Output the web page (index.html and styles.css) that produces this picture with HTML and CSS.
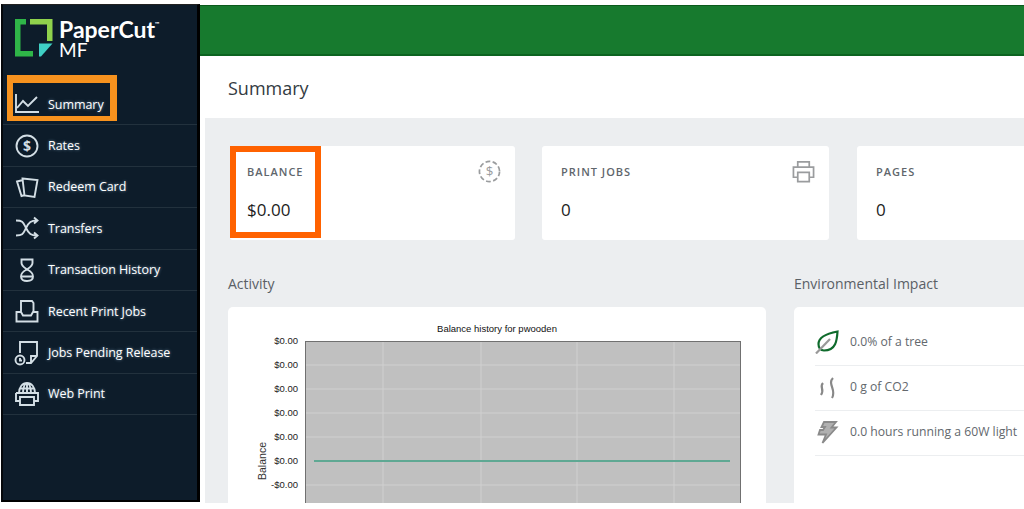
FILE: index.html
```html
<!DOCTYPE html>
<html lang="en">
<head>
<meta charset="utf-8">
<title>PaperCut MF - Summary</title>
<link rel="stylesheet" href="styles.css">
</head>
<body>
<div class="app">
  <aside class="sidebar">
    <div class="brand">
      <svg class="brand-mark" viewBox="0 0 38 38" width="38" height="38">
        <path d="M0 0H11V5.500H5.500V32H18V37.500H0Z" fill="#2fb548"/>
        <path d="M15 0H37.500V22H32V5.500H15Z" fill="#8fd24c"/>
        <path d="M24 24.500H37.500L26 37.500H24Z" fill="#3fd0c4"/>
      </svg>
      <div class="brand-text"><span class="brand-name">PaperCut<sup class="tm">™</sup></span><span class="brand-sub">MF</span></div>
    </div>
    <nav class="nav">
      <a class="nav-item">
        <svg class="ico" viewBox="0 0 26 22"><path d="M2 1V19H25M3 15L9 8L14 13L23 4" /></svg>
        <span class="nav-label">Summary</span>
        <span class="hl-nav"></span>
      </a>
      <a class="nav-item">
        <svg class="ico" viewBox="0 0 26 26"><circle cx="13" cy="13" r="10.500"/><text x="13" y="18" class="ico-text">$</text></svg>
        <span class="nav-label">Rates</span>
      </a>
      <a class="nav-item">
        <svg class="ico" viewBox="0 0 26 24"><path d="M9 5L3 6.500L7.500 21L11 20M8.500 3.500L23.500 5L20.500 22L10.500 20.500Z"/></svg>
        <span class="nav-label">Redeem Card</span>
      </a>
      <a class="nav-item">
        <svg class="ico" viewBox="0 0 26 24"><path d="M2 4.500C9 4.500 9 6 12 12C15 18 17 19.500 23 19.500M2 19.500C9 19.500 9 18 12 12C15 6 17 4.500 23 4.500M20 1.500L23.500 4.500L20 7.500M20 16.500L23.500 19.500L20 22.500"/></svg>
        <span class="nav-label">Transfers</span>
      </a>
      <a class="nav-item">
        <svg class="ico" viewBox="0 0 26 26"><path d="M7.500 2.500H18.500V6C18.500 9 15 11 13 12.500C11 11 7.500 9 7.500 6ZM13 12.500C16.500 14 19 16.500 19 19.500C19 22.500 16.500 24 13 24C9.500 24 7 22.500 7 19.500C7 16.500 9.500 14 13 12.500ZM7.500 19.500H18.500"/></svg>
        <span class="nav-label">Transaction History</span>
      </a>
      <a class="nav-item">
        <svg class="ico" viewBox="0 0 26 26"><path d="M7 14V3H18L19.500 5V14M2.500 14H7L9 17.500H17L19 14H23.500V23.500H2.500Z"/></svg>
        <span class="nav-label">Recent Print Jobs</span>
      </a>
      <a class="nav-item">
        <svg class="ico" viewBox="0 0 26 26"><path d="M6 13V2H23V16L17 23H12M17 23V16H23"/><circle cx="6" cy="20" r="4.500"/><path d="M6 18V20.500H8"/></svg>
        <span class="nav-label">Jobs Pending Release</span>
      </a>
      <a class="nav-item">
        <svg class="ico" viewBox="0 0 26 26"><path d="M5 12C5 6 8.500 2 13 2C17.500 2 21 6 21 12M9 12C9 6 11 2 13 2C15 2 17 6 17 12M13 2V12M5.500 7.500H20.500M2 12H24V20H20M6 20H2V12M6 16H20V24H6Z"/></svg>
        <span class="nav-label">Web Print</span>
      </a>
    </nav>
  </aside>

  <main class="main">
    <div class="topbar"></div>
    <header class="page-title"><h1>Summary</h1></header>
    <div class="content">
      <section class="stats">
        <article class="stat stat-balance">
          <div class="stat-label">BALANCE</div>
          <div class="stat-value">$0.00</div>
          <svg class="stat-ico" viewBox="0 0 24 24"><circle cx="12" cy="12" r="10.500" stroke-dasharray="5 2.500"/><text x="12" y="17" class="stat-ico-text">$</text></svg>
          <span class="hl-balance"></span>
        </article>
        <article class="stat">
          <div class="stat-label">PRINT JOBS</div>
          <div class="stat-value">0</div>
          <svg class="stat-ico" viewBox="0 0 24 24"><path d="M6 7V2H18V7M6 18H1.500V7.500H22.500V18H18M6 13H18V22.500H6Z"/></svg>
        </article>
        <article class="stat">
          <div class="stat-label">PAGES</div>
          <div class="stat-value">0</div>
        </article>
      </section>

      <section class="lower">
        <div class="col">
          <h2 class="section-title">Activity</h2>
          <div class="card chart-card">
            <svg class="chart" viewBox="0 0 538 196" width="538" height="196">
              <text x="269" y="25" class="chart-title">Balance history for pwooden</text>
              <rect x="77.500" y="34.500" width="435" height="170" class="plot"/>
              <g class="grid">
                <path d="M78 58H512M78 82H512M78 106H512M78 130H512M78 178H512"/>
                <path d="M155 35V196M253 35V196M349 35V196M446 35V196"/>
              </g>
              <path d="M86 154H502" class="series"/>
              <g class="ylab">
                <text x="70" y="37">$0.00</text>
                <text x="70" y="61">$0.00</text>
                <text x="70" y="85">$0.00</text>
                <text x="70" y="109">$0.00</text>
                <text x="70" y="133">$0.00</text>
                <text x="70" y="157">$0.00</text>
                <text x="70" y="181">-$0.00</text>
              </g>
              <text class="yname" transform="translate(38 154) rotate(-90)">Balance</text>
            </svg>
          </div>
        </div>
        <div class="col">
          <h2 class="section-title">Environmental Impact</h2>
          <div class="card env-card">
            <div class="env-row">
              <svg class="env-ico leaf" viewBox="0 0 24 24"><path d="M22.500 1.500C22 10 21 20.500 9 20.500C5.500 20.500 3.500 18 3.500 14C3.500 7 12 3.500 22.500 1.500Z"/><path class="leaf-vein" d="M1 23.500L15 9"/></svg>
              <span>0.0% of a tree</span>
            </div>
            <div class="env-row">
              <svg class="env-ico" viewBox="0 0 24 24"><path d="M8 8C4 12 10 14 6 20M18 3C12 9 22 15 17 23"/></svg>
              <span>0 g of CO2</span>
            </div>
            <div class="env-row">
              <svg class="env-ico bolt" viewBox="0 0 24 24"><path d="M9 2H21L16.500 7.500H21.500L7.500 23L11 14.500H3.500L5 10H8L10 7H6.500Z"/></svg>
              <span>0.0 hours running a 60W light</span>
            </div>
          </div>
        </div>
      </section>
    </div>
  </main>
</div>
</body>
</html>
```

FILE: styles.css
```css
* { box-sizing: border-box; }
html, body { margin: 0; height: 509px; overflow: hidden; background: #fff; }
body { font-family: "Open Sans", "Noto Sans", sans-serif; color: #333; }

.app { display: flex; height: 504px; padding: 4px 0 0 1px; }

.sidebar {
  width: 199px;
  flex: none;
  height: 498px;
  background: #0d1c2a;
  border-left: 2px solid #05080c;
  border-right: 3px solid #000;
  border-top: 1px solid #222;
  border-bottom: 2px solid #000;
}
.brand { height: 79px; display: flex; align-items: flex-start; gap: 6px; padding: 14px 0 0 12px; }
.brand-mark { flex: none; }
.brand-text { display: flex; flex-direction: column; margin-top: -1px; color: #fff; font-family: "Lato", sans-serif; font-weight: 700; }
.brand-name { font-size: 23px; line-height: 22px; white-space: nowrap; }
.tm { font-size: 6px; line-height: 0; vertical-align: 12px; }
.brand-sub { margin-top: 1px; font-size: 19px; line-height: 18px; font-weight: 400; }

.nav { display: flex; flex-direction: column; }
.nav-item {
  position: relative;
  height: 41.400px;
  display: flex;
  align-items: center;
  gap: 8px;
  padding-left: 11px;
  border-bottom: 1px solid #22313d;
  color: #fff;
}
.ico { width: 26px; height: 26px; flex: none; fill: none; stroke: #d3dee5; stroke-width: 1.900; }
.ico-text { fill: #d3dee5; stroke: none; font: 700 14px "Open Sans", sans-serif; text-anchor: middle; }
.nav-label { font-size: 12.500px; font-weight: 500; text-shadow: 0 0 3px #6f8ca3; white-space: nowrap; letter-spacing: -0.05px; }
.hl-nav {
  position: absolute;
  left: 4px; top: -9px;
  width: 110px; height: 46px;
  border: 5px solid #f7921e;
  border-top-width: 8px;
  border-left-width: 6px;
  border-right-width: 7px;
}

.main { flex: 1; min-width: 0; display: flex; flex-direction: column; height: 499px; }
.topbar { height: 51px; flex: none; margin-top: 1px; background: #177a2e; border-top: 1px solid #0b5a1c; border-bottom: 2px solid #0c6420; }
.page-title { height: 62px; flex: none; display: flex; align-items: center; padding-left: 28px; }
.page-title h1 { margin: 1px 0 0; font-size: 18px; font-weight: 400; color: #333b42; }

.content { flex: 1; min-height: 0; margin-left: 5px; padding: 28px 0 0 23px; background: #eceef0; overflow: hidden; }
.stats { display: grid; grid-template-columns: 285px 287px 287px; column-gap: 27px; margin-left: 2px; }
.stats .stat:last-child { margin-left: 1px; }
.stat { position: relative; height: 94px; background: #fff; border-radius: 3px; padding: 19px 19px 0; }
.stat-balance { padding-left: 17px; }
.stat-label { font-size: 11px; line-height: 14px; letter-spacing: 1px; color: #60666c; font-weight: 600; }
.stat-value { margin-top: 19px; font-size: 17px; line-height: 24px; color: #1c1c1c; }
.stat-ico { position: absolute; top: 14px; right: 14px; width: 23px; height: 23px; fill: none; stroke: #9a9c9e; stroke-width: 1.800; }
.stat-ico-text { fill: #9a9c9e; stroke: none; font: 400 14px "Open Sans", sans-serif; text-anchor: middle; }
.hl-balance { position: absolute; left: 0; top: 0; width: 91px; height: 92px; border: 6px solid #ff6200; }

.lower { display: grid; grid-template-columns: 538px 300px; column-gap: 28px; margin-top: 34px; }
.section-title { margin: 0 0 13px; font-size: 14px; line-height: 20px; font-weight: 400; color: #5a6066; }
.card { background: #fff; border-radius: 5px 5px 0 0; height: 200px; }
.chart { display: block; }
.plot { fill: #c0c0c0; stroke: #707070; }
.grid path { stroke: #d0d0d0; stroke-width: 1; fill: none; }
.series { stroke: #5fa893; stroke-width: 2; fill: none; }
.chart-title { font: 9.500px "Liberation Sans", sans-serif; fill: #111; text-anchor: middle; }
.ylab text { font: 9.500px "Liberation Sans", sans-serif; fill: #222; text-anchor: end; }
.yname { font: 10.500px "Liberation Sans", sans-serif; fill: #333; text-anchor: middle; }

.env-card { padding: 14px 0 0 21px; }
.env-row { height: 45px; padding-bottom: 3px; display: flex; align-items: center; gap: 11px; border-bottom: 1px solid #eceef0; font-size: 12.200px; color: #63686d; white-space: nowrap; }
.env-ico { width: 24px; height: 24px; flex: none; fill: none; stroke: #888; stroke-width: 2.200; }
.env-ico.leaf { stroke: #0f6b2c; }
.leaf-vein { stroke: #999; }
.env-ico.bolt { fill: #b0b0b0; stroke: #8a8a8a; stroke-width: 1.800; }
```
